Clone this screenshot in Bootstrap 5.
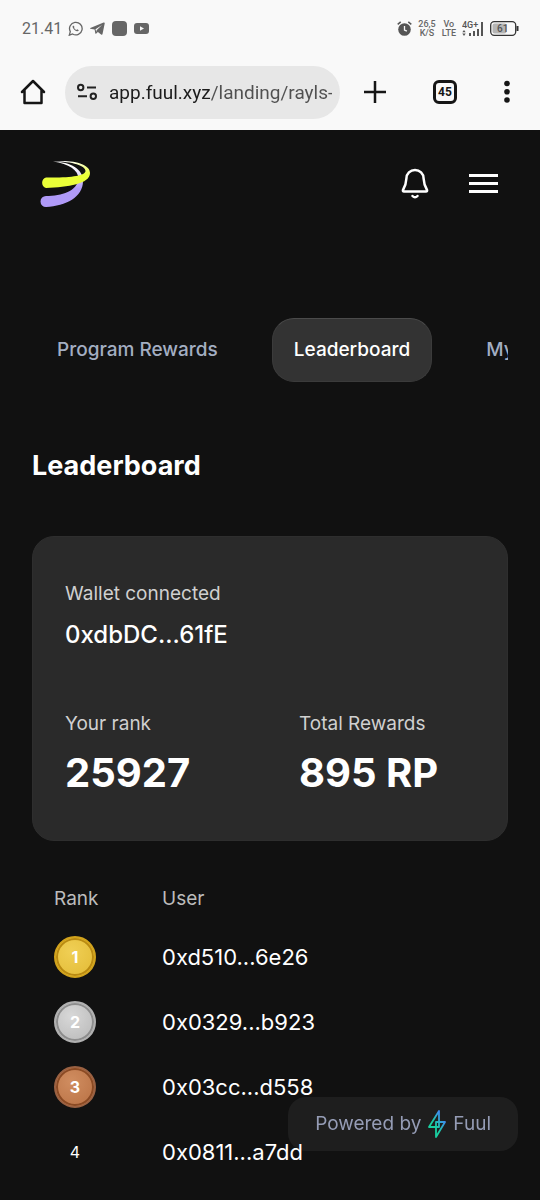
<!DOCTYPE html>
<html lang="en">
<head>
<meta charset="utf-8">
<meta name="viewport" content="width=device-width, initial-scale=1">
<title>Leaderboard</title>
<link href="https://cdn.jsdelivr.net/npm/bootstrap@5.3.0/dist/css/bootstrap.min.css" rel="stylesheet">
<style>
body{background:#111;color:#fff;font-family:Inter,sans-serif;font-size:19px;line-height:24px;min-height:100vh}
svg{display:block;flex:none}
button{border:0;background:none;padding:0;color:inherit}
.browser-chrome{background:#f9f9f9;color:#161616;font-family:Roboto,sans-serif;height:130px}
.status-bar{height:57px;color:#666;font-size:16px;padding:0 21px 0 22px}
.app-icons{gap:7px;margin-left:6px}
.system-icons{gap:6px}
.tiny-stack{font-size:9px;line-height:9px;font-weight:500;text-align:center}
.address-row{height:70px;padding:0 30px 0 20px}
.toolbar-end{gap:47px}
.address-pill{background:#e7e7e7;border-radius:27px;height:53px;padding:0 8px 0 12px;margin-left:19px;margin-right:24px}
.address-input{border:0;outline:0;width:100%;min-width:0;padding:0;font-size:19px;height:32px;color:transparent;background:linear-gradient(90deg,#1c1c1c 106px,#505050 106px);-webkit-background-clip:text;background-clip:text}
.tab-count{width:24px;height:24px;border:3px solid #161616;border-radius:6px;font-size:12px;line-height:18px;font-weight:700}
.site-header{height:107px;padding:0 42px 0 40px}
.menu-toggle{margin-left:40px}
.tab-strip{margin:81px 32px 0;padding-left:3px;gap:32px;overflow:hidden}
.tab-pill{height:64px;padding:0 21px;border:1px solid transparent;border-radius:22px;font-size:19px;font-weight:500;color:#a3aec2;white-space:nowrap;flex:none}
.tab-pill.active{background:#333;color:#fff;border-color:#3b3b3b;border-top-color:#4b4b4b}
.tab-edge{flex:1 0 0;padding-right:0;border-right:0;overflow:hidden;text-align:left}
.page-title{font-size:27px;line-height:36px;font-weight:700;margin:66px 32px 0}
.stats-card{background:#2a2a2a;border:1px solid #2e2e2e;border-radius:22px;margin:52px 32px 0;padding:45px 32px 42px}
.muted-text{color:#d0d0d0}
.wallet-id{font-size:24px;line-height:32px;font-weight:500;margin-top:13px}
.big-number{font-size:40px;line-height:50px;font-weight:700;margin-top:12px}
.stats-row{display:grid;grid-template-columns:1fr 1fr;gap:58px;margin-top:61px}
.board{width:calc(100% - 64px);margin:33px 32px 0}
.board th{font-weight:400;color:#bcbcbc;height:50px;padding:0}
.board td{height:65px;padding:0;font-size:22px}
.board .rank-col{width:130px;padding-left:22px}
.medal{width:42px;height:42px;border-radius:50%;font-size:16px;font-weight:700;display:flex;align-items:center;justify-content:center}
.medal-gold{background:radial-gradient(circle at 40% 35%,#f0cf55,#e2ba34);border:2px solid #d2a31c;box-shadow:inset 0 0 0 2px #b98a12}
.medal-silver{background:radial-gradient(circle at 40% 35%,#d8d8d8,#b6b6b6);border:2px solid #b0b0b0;box-shadow:inset 0 0 0 2px #8d8d8d}
.medal-bronze{background:radial-gradient(circle at 40% 35%,#d08d60,#b87043);border:2px solid #9a6142;box-shadow:inset 0 0 0 2px #8a4a24}
.medal-none{font-weight:400}
.powered{position:fixed;right:22px;bottom:49px;height:54px;padding:0 27px;border-radius:18px;background:rgba(255,255,255,.055);color:#959cb5;gap:7px;text-decoration:none}
</style>
</head>
<body>
<div class="browser-chrome">
  <div class="status-bar d-flex align-items-center">
    <span>21.41</span>
    <div class="app-icons d-flex align-items-center">
      <svg width="15" height="15" viewBox="0 0 14 15" fill="none" stroke="#666"><path d="M.8 14.200 1.800 10.600A6.300 6.300 0 1 1 4.100 13Z" stroke-width="1.300"/><path d="M4.700 4.500c-.7.5-.8 1.300-.3 2.200 1 1.900 2.200 3 4 3.500.9.2 1.600-.2 1.900-1L8.700 8.300l-.8.8C6.900 8.600 6.100 7.900 5.500 6.800l.6-.8Z" fill="#666" stroke="none"/></svg>
      <svg width="15" height="13" viewBox="0 0 15 13" fill="#666"><path d="M.3 5.900 13.600.5c.8-.3 1.300.1 1.100 1L12.600 11.800c-.2.900-.8 1.100-1.500.600L7.900 10 6.300 11.600c-.5.400-.9.200-1-.4L4.600 7.500.4 6.700c-.5-.2-.5-.5-.1-.8ZM5.500 7.300 12 2.900 6.600 8.300 6.300 10Z" fill-rule="evenodd"/></svg>
      <svg width="15" height="15" viewBox="0 0 15 15"><rect width="15" height="15" rx="4" fill="#666"/></svg>
      <svg width="15" height="11" viewBox="0 0 15 11"><rect width="15" height="11" rx="3" fill="#666"/><path d="M6 3.200 10 5.500 6 7.800Z" fill="#f9f9f9"/></svg>
    </div>
    <div class="system-icons d-flex align-items-center ms-auto">
      <svg width="15" height="15" viewBox="0 0 15 15" fill="none" stroke="#555"><circle cx="7.500" cy="8.500" r="6.300" fill="#555" stroke="none"/><path d="M.7 3.300 3.700.9M14.300 3.300 11.300.9" stroke-width="1.500"/><path d="M7.500 5v4l2.400 1.200" stroke="#f9f9f9" stroke-width="1.300"/></svg>
      <div class="tiny-stack">26,5<br>K/S</div>
      <div class="tiny-stack">Vo<br>LTE</div>
      <svg width="22" height="16" viewBox="0 0 22 16" fill="#555"><text x="0" y="7" font-size="9" font-weight="500">4G+</text><path d="M2 9 3.700 11.200H.3ZM2 15 .3 12.500H3.700ZM7 12h2v3H7ZM11 10h2v5h-2ZM15 8h2v7h-2ZM19 1h2v14h-2Z"/></svg>
      <svg width="29" height="15" viewBox="0 0 29 15"><rect x=".7" y=".7" width="25" height="13.600" rx="3.500" fill="none" stroke="#333" stroke-width="1.300"/><rect x="2.500" y="2.500" width="14" height="10" rx="2" fill="#b5b5b5"/><path d="M27.500 5v5" stroke="#333" stroke-width="2"/><text x="7" y="11" font-size="10" font-weight="500" fill="#555">61</text></svg>
    </div>
  </div>
  <div class="address-row d-flex align-items-center">
    <button aria-label="Home"><svg width="26" height="26" viewBox="0 0 26 26" fill="none" stroke="#161616" stroke-width="2.500" stroke-linecap="round" stroke-linejoin="round"><path d="M2 13 13 2 24 13M4.500 11V24H21.500V11"/></svg></button>
    <div class="address-pill d-flex align-items-center flex-fill">
      <button aria-label="Site settings"><svg width="20" height="20" viewBox="0 0 20 20" fill="none" stroke="#222" stroke-width="2"><circle cx="3.700" cy="5.500" r="2.700"/><circle cx="16.300" cy="14.300" r="2.700"/><path d="M10 5.500h9M1 14.300h9"/></svg></button>
      <label class="visually-hidden" for="address">Address</label>
      <input id="address" class="address-input ms-2 ps-1" type="text" value="app.fuul.xyz/landing/rayls-">
    </div>
    <div class="toolbar-end d-flex align-items-center">
      <button aria-label="New tab"><svg width="22" height="22" viewBox="0 0 22 22" stroke="#161616" stroke-width="2.500"><path d="M11 0v22M0 11h22"/></svg></button>
      <button class="tab-count" aria-label="Tabs">45</button>
      <button aria-label="Menu"><svg width="6" height="24" viewBox="0 0 6 24" fill="#161616"><circle cx="3" cy="3.500" r="2.800"/><circle cx="3" cy="11.700" r="2.800"/><circle cx="3" cy="20" r="2.800"/></svg></button>
    </div>
  </div>
</div>

<header class="site-header d-flex align-items-center justify-content-between">
  <a href="#" aria-label="Home page"><svg width="51" height="48" viewBox="0 0 51 48">
    <defs><linearGradient id="lilac" x1=".6" y1="0" x2=".6" y2="1"><stop offset=".1" stop-color="#fff"/><stop offset=".6" stop-color="#b09af8"/></linearGradient><linearGradient id="lime" x1=".5" y1="0" x2=".7" y2="1"><stop offset="0" stop-color="#fff"/><stop offset=".55" stop-color="#eaff38"/></linearGradient></defs>
    <path d="M13 1.500C31 2 43 9 43 21 43 37 26 46 6 47A5.500 5.500 0 0 1 6 36C22 36 37 31 38.500 19 38.500 10 29 4 13 1.500Z" fill="url(#lilac)"/>
    <path d="M13 1.300C34-.5 50 4 50 13 50 24 28 27 6 28A5.500 5.500 0 0 1 6 17.500C29 18 45.500 16 45.500 11 45.500 6 33 1.500 13 1.300Z" fill="url(#lime)"/>
  </svg></a>
  <div class="d-flex align-items-center">
    <button aria-label="Notifications"><svg width="28" height="32" viewBox="0 0 28 32" fill="none" stroke="#fff" stroke-width="2.500" stroke-linejoin="round" stroke-linecap="round"><path d="M2 22C5 17 5.200 15 5.400 10.500A8.600 8.600 0 0 1 22.600 10.500C22.800 15 23 17 26 22Q26.500 23.500 25 23.500H3Q1.500 23.500 2 22Z"/><path d="M11.500 28q2.500 2.600 5 0"/></svg></button>
    <button class="menu-toggle" aria-label="Open menu"><svg width="29" height="20" viewBox="0 0 29 20" fill="#fff"><path d="M0 0h29v3H0ZM0 8h29v3H0ZM0 16h29v3H0Z"/></svg></button>
  </div>
</header>

<main>
  <nav class="tab-strip d-flex" aria-label="Sections">
    <button class="tab-pill">Program Rewards</button>
    <button class="tab-pill active">Leaderboard</button>
    <button class="tab-pill tab-edge">My</button>
  </nav>
  <h1 class="page-title">Leaderboard</h1>
  <section class="stats-card">
    <div class="muted-text">Wallet connected</div>
    <div class="wallet-id">0xdbDC...61fE</div>
    <div class="stats-row">
      <div><div class="muted-text">Your rank</div><div class="big-number">25927</div></div>
      <div><div class="muted-text">Total Rewards</div><div class="big-number">895 RP</div></div>
    </div>
  </section>
  <table class="board">
    <thead><tr><th class="rank-col">Rank</th><th>User</th></tr></thead>
    <tbody>
      <tr><td class="rank-col"><span class="medal medal-gold">1</span></td><td>0xd510...6e26</td></tr>
      <tr><td class="rank-col"><span class="medal medal-silver">2</span></td><td>0x0329...b923</td></tr>
      <tr><td class="rank-col"><span class="medal medal-bronze">3</span></td><td>0x03cc...d558</td></tr>
      <tr><td class="rank-col"><span class="medal medal-none">4</span></td><td>0x0811...a7dd</td></tr>
    </tbody>
  </table>
</main>
<a class="powered d-flex align-items-center" href="#">Powered by
  <svg width="18" height="28" viewBox="0 0 18 28" fill="none" stroke="url(#bolt)" stroke-width="1.800" stroke-linejoin="round"><defs><linearGradient id="bolt" x1="1" y1="0" x2="0" y2="1"><stop offset=".2" stop-color="#3f8cf0"/><stop offset=".6" stop-color="#19cfa0"/></linearGradient></defs><path d="M11 1V17H1ZM8 27V12H17Z"/></svg>
  Fuul</a>
<script src="https://cdn.jsdelivr.net/npm/bootstrap@5.3.0/dist/js/bootstrap.bundle.min.js"></script>
</body>
</html>
